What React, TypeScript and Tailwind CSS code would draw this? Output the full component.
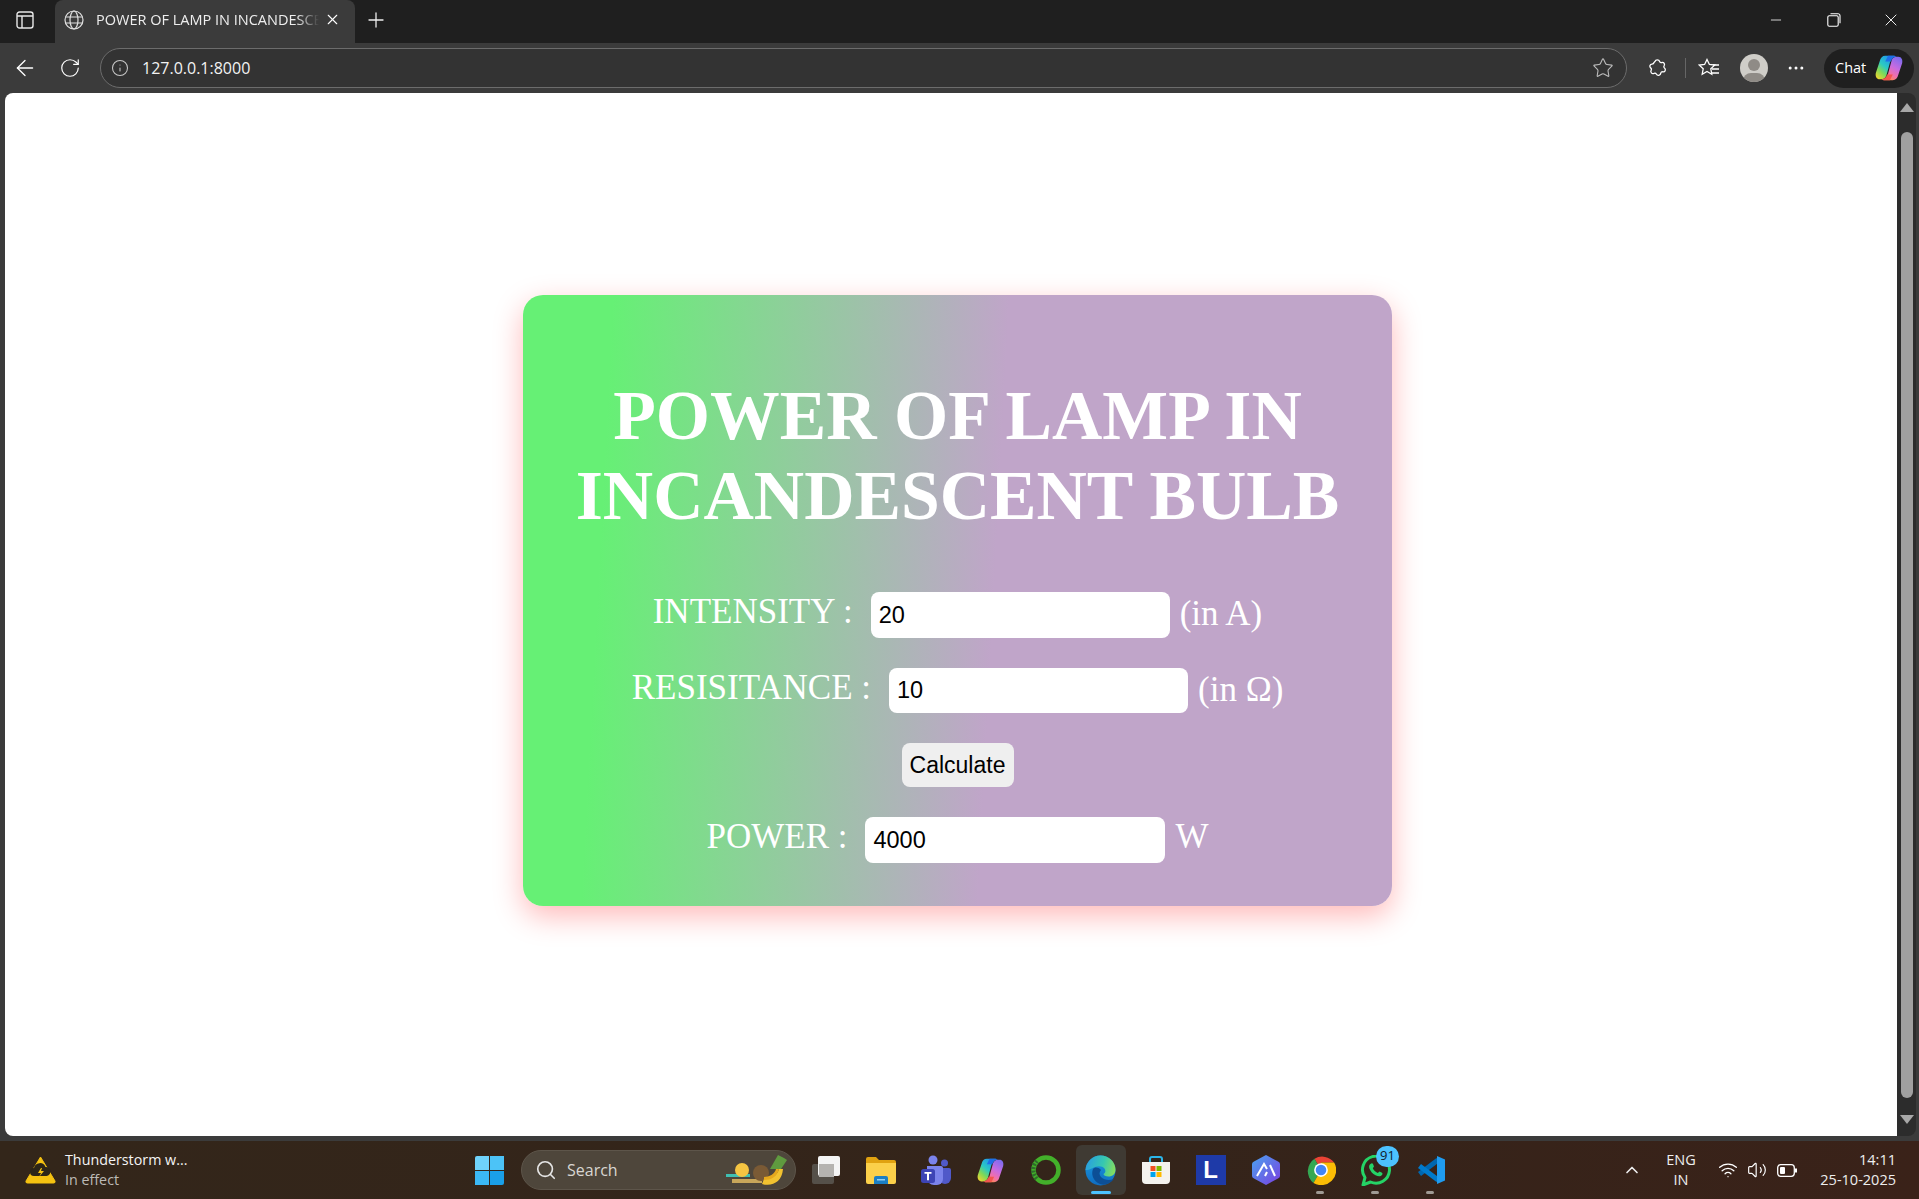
import React from "react";
import { ArrowLeft, ChevronUp, Info, Minus, MoreHorizontal, Plus, RotateCw, Search, Star, Volume2, Wifi, X } from "lucide-react";

const Copilot = ({ size = 30 }: { size?: number }) => (
    <svg width={size} height={size} viewBox="0 0 32 32">
        <defs>
            <linearGradient id="cpA" x1="0.8" y1="0" x2="0.1" y2="1">
                <stop offset="0" stopColor="#1e90f0" />
                <stop offset="0.45" stopColor="#2bc9c4" />
                <stop offset="0.7" stopColor="#7ed957" />
                <stop offset="1" stopColor="#f6d32d" />
            </linearGradient>
            <linearGradient id="cpB" x1="0.8" y1="0" x2="0.3" y2="1">
                <stop offset="0" stopColor="#7b6cf0" />
                <stop offset="0.45" stopColor="#c86be0" />
                <stop offset="0.75" stopColor="#f26fa8" />
                <stop offset="1" stopColor="#fb8b4b" />
            </linearGradient>
        </defs>
        <path d="M12 3H22C19 4 18 7 17 10L13.500 23C12.500 27 10 28 8 28H6C3 28 1 25 2 21L6 9C7 5 9 3 12 3z" fill="url(#cpA)" />
        <path d="M20 29H10C13 28 14 25 15 22L18.500 9C19.500 5 22 4 24 4H26C29 4 31 7 30 11L26 23C25 27 23 29 20 29z" fill="url(#cpB)" />
        <path d="M8 28c3 0 5-2 6-5h6l-3 6h-7z" fill="#f2554f" />
        <path d="M24 4c-3 0-5 2-6 5h-6l3-6h7z" fill="#1f6fe8" />
    </svg>
);

const Slot = ({ children, active, dot, running }: { children: React.ReactNode; active?: boolean; dot?: boolean; running?: boolean }) => (
    <div className="relative w-[55px] h-[50px] flex items-center justify-center">
        {active && <div className="absolute left-[3px] top-0 w-[50px] h-[50px] rounded-md bg-[#3f3a33]" />}
        <div className="relative flex items-center justify-center">{children}</div>
        {running && <div className="absolute bottom-[1px] left-[18px] w-[20px] h-[3px] rounded-full bg-[#4cc2ff]" />}
        {dot && <div className="absolute bottom-[1px] left-[23px] w-[8px] h-[3px] rounded-full bg-[#a09a94]" />}
    </div>
);

export default function App() {
    return (
        <div className="w-[1919px] h-[1199px] flex flex-col overflow-hidden bg-[#3b3b3b] font-['Liberation_Sans',sans-serif]">
            {/* Tab strip */}
            <div className="h-[43px] flex bg-[#1f1f1f] text-white">
                <div className="w-[55px] flex items-center justify-center pb-[4px] pr-[6px]">
                    <svg width="18" height="18" viewBox="0 0 18 18" fill="none" stroke="#e8e8e8" strokeWidth="1.4">
                        <rect x="1" y="1" width="16" height="16" rx="2.500" />
                        <path d="M1 5h16M6 5v12" />
                    </svg>
                </div>
                <div className="w-[300px] bg-[#3b3b3b] rounded-t-lg flex items-center pl-[9px] pb-[4px] gap-[12px]">
                    <svg width="20" height="20" viewBox="0 0 20 20" fill="none" stroke="#e0e0e0" strokeWidth="1.2">
                        <circle cx="10" cy="10" r="9" />
                        <ellipse cx="10" cy="10" rx="4" ry="9" />
                        <path d="M1.500 7h17M1.500 13h17" />
                    </svg>
                    <div className="w-[223px] overflow-hidden whitespace-nowrap text-[14.500px] font-['Open_Sans',sans-serif] text-[#eeeeee] [mask-image:linear-gradient(90deg,black_90%,transparent)]">POWER OF LAMP IN INCANDESCENT</div>
                    <X size={17} strokeWidth={1.6} className="text-white -ml-[7px]" />
                </div>
                <div className="w-[42px] flex items-center justify-center pb-[4px]">
                    <Plus size={24} strokeWidth={1.3} className="text-[#eeeeee]" />
                </div>
                <div className="flex-1" />
                <div className="flex items-center pb-[4px] text-white">
                    <div className="w-[58px] flex justify-center"><Minus size={16} strokeWidth={1.2} /></div>
                    <div className="w-[58px] flex justify-center">
                        <svg width="14" height="14" viewBox="0 0 14 14" fill="none" stroke="white" strokeWidth="1.1">
                            <rect x="0.8" y="2.800" width="10.400" height="10.400" rx="1.500" />
                            <path d="M3.500 .8h7.500a2 2 0 0 1 2 2v7.500" />
                        </svg>
                    </div>
                    <div className="w-[56px] flex justify-center"><X size={20} strokeWidth={1.1} /></div>
                </div>
            </div>

            {/* Toolbar */}
            <div className="h-[50px] flex items-center text-white">
                <div className="w-[50px] flex justify-center"><ArrowLeft size={26} strokeWidth={1.2} /></div>
                <div className="w-[40px] flex justify-center"><RotateCw size={22} strokeWidth={1.3} /></div>
                <div className="ml-[10px] w-[1527px] h-[40px] rounded-full border border-[#6c6c6c] bg-[#333333] flex items-center pl-[10px] pr-[12px]">
                    <Info size={18} strokeWidth={1.4} className="text-[#c8c8c8]" />
                    <span className="ml-[13px] text-[16px] font-['Open_Sans',sans-serif] text-[#f2f2f2]">127.0.0.1:8000</span>
                    <div className="flex-1" />
                    <Star size={22} strokeWidth={1.2} className="text-[#bcbcbc]" />
                </div>
                <div className="w-[56px] flex justify-center ml-[2px]">
                    <svg width="20" height="21" viewBox="0 0 20 21" fill="none" stroke="white" strokeWidth="1.300">
                        <path d="M8 3.500a2.400 2.400 0 0 1 4.600 0c.3 1 1.400 1.300 2.300 1 2-.4 3.300 1.800 2.200 3.400-.6.8-.2 1.700.4 2.200 1.800 1.400.5 4.200-1.700 3.700-1-.2-1.900.4-2 1.400-.3 2.400-3.400 2.900-4.500.8-.5-.9-1.500-1-2.300-.6-2.100.9-4-1.300-2.800-3.200.5-.8.2-1.800-.5-2.300-1.600-1.300-.8-3.800 1.300-3.800 1 0 1.800-.6 2-1.600z" />
                    </svg>
                </div>
                <div className="w-[1px] h-[20px] bg-[#666666]" />
                <div className="w-[45px] flex justify-center">
                    <svg width="22" height="20" viewBox="0 0 22 20" fill="none" stroke="white" strokeWidth="1.300">
                        <path d="M9 1.500l2.400 5 5.300.6-3.900 3.700 1 5.400L9 13.500l-4.800 2.700 1-5.400L1.300 7.100l5.300-.6z" />
                        <path d="M15 7h6M14 11h7M14 15h7" />
                    </svg>
                </div>
                <div className="w-[28px] h-[28px] ml-[9px] rounded-full bg-[#cfcdc8] relative overflow-hidden">
                    <div className="absolute left-[8px] top-[5px] w-[12px] h-[12px] rounded-full bg-[#8f8b86]" />
                    <div className="absolute left-[3px] top-[19px] w-[22px] h-[16px] rounded-full bg-[#8f8b86]" />
                </div>
                <div className="w-[56px] flex justify-center"><MoreHorizontal size={20} strokeWidth={1.6} /></div>
                <div className="w-[90px] h-[39px] rounded-full bg-[#1f1f1f] flex items-center pl-[11px] gap-[8px] text-[14.500px] font-['Open_Sans',sans-serif]">
                    <span>Chat</span>
                    <Copilot size={30} />
                </div>
            </div>

            {/* Page */}
            <div className="flex-1 flex min-h-0 pl-[5px]">
                <div className="flex-1 bg-white rounded-tl-lg rounded-bl-lg pt-[202px] pl-[13px] flex justify-center items-start">
                    <div className="w-[869px] h-[611px] rounded-[20px] bg-[linear-gradient(93deg,#66f075_10%,#c0a5c9_54%)] shadow-[0_10px_30px_rgba(255,0,0,0.28)] font-['Liberation_Serif',serif] text-white">
                        <h1 className="pt-[81px] text-center font-bold text-[69.700px] leading-[79.500px] px-[20px]">POWER OF LAMP IN INCANDESCENT BULB</h1>
                        <div className="mt-[57px] flex justify-center items-center gap-[10px] text-[35px] leading-[46px] h-[46px]">
                            <span className="mr-[8px] mb-[6px]">INTENSITY :</span>
                            <input readOnly value="20" className="w-[299px] h-[46px] bg-white rounded-lg px-[8px] text-[23.500px] text-black font-['Liberation_Sans',sans-serif] outline-none" />
                            <span className="mb-[2px]">(in A)</span>
                        </div>
                        <div className="mt-[30px] flex justify-center items-center gap-[10px] text-[35px] leading-[45px] h-[45px]">
                            <span className="mr-[8px] mb-[6px]">RESISITANCE :</span>
                            <input readOnly value="10" className="w-[299px] h-[45px] bg-white rounded-lg px-[8px] text-[23.500px] text-black font-['Liberation_Sans',sans-serif] outline-none" />
                            <span className="mb-[2px]">(in Ω)</span>
                        </div>
                        <div className="mt-[30px] flex justify-center">
                            <button className="w-[112px] h-[44px] bg-[#efefef] rounded-lg text-[23px] text-black font-['Liberation_Sans',sans-serif]">Calculate</button>
                        </div>
                        <div className="mt-[30px] flex justify-center items-center gap-[10px] text-[35px] leading-[46px] h-[46px]">
                            <span className="mr-[8px] mb-[6px]">POWER :</span>
                            <input readOnly value="4000" className="w-[300px] h-[46px] bg-white rounded-lg px-[8px] text-[23.500px] text-black font-['Liberation_Sans',sans-serif] outline-none" />
                            <span className="mb-[6px]">W</span>
                        </div>
                    </div>
                </div>
                {/* Scrollbar */}
                <div className="w-[19px] mr-[3px] relative bg-[#2c2c2c] rounded-r-lg">
                    <div className="absolute left-[3px] top-[10px] w-0 h-0 border-x-[7px] border-x-transparent border-b-[9px] border-b-[#a8a8a8]" />
                    <div className="absolute left-[4px] top-[39px] w-[12px] h-[966px] rounded-full bg-[#a0a0a0]" />
                    <div className="absolute left-[3px] bottom-[12px] w-0 h-0 border-x-[7px] border-x-transparent border-t-[9px] border-t-[#a8a8a8]" />
                </div>
            </div>

            {/* Taskbar */}
            <div className="mt-[5px] h-[58px] bg-[linear-gradient(90deg,#33261a,#34241a_60%,#3a2219)] flex items-center relative text-white font-['Open_Sans',sans-serif]">
                <div className="w-[461px] flex items-center pl-[25px]">
                    <svg width="31" height="28" viewBox="0 0 31 28">
                        <path d="M15.500 1L30 25a1.500 1.500 0 0 1-1.300 2H2.300A1.500 1.500 0 0 1 1 25z" fill="#f5c211" stroke="#f5c211" strokeLinejoin="round" />
                        <path d="M9 20a4 4 0 0 1 0-8 6 6 0 0 1 11.500-1 4.500 4.500 0 0 1 1 9z" fill="#2c2518" />
                        <path d="M16 12l-3 5h3l-2 4 5-6h-3l1-3z" fill="#f5c211" />
                    </svg>
                    <div className="ml-[9px] leading-[20px]">
                        <div className="text-[14.300px] text-[#f4f4f4]">Thunderstorm w...</div>
                        <div className="text-[14.300px] text-[#bdbab6]">In effect</div>
                    </div>
                </div>
                {/* Start */}
                <div className="w-[56px] flex justify-center">
                    <div className="w-[29px] h-[29px] grid grid-cols-2 gap-[1px]">
                        <div className="bg-[#6fd3fb] rounded-tl-[2px]" />
                        <div className="bg-[#4cc3f7]" />
                        <div className="bg-[#3bb8f5]" />
                        <div className="bg-[#1a9fe8] rounded-br-[2px]" />
                    </div>
                </div>
                {/* Search */}
                <div className="w-[275px] h-[40px] ml-[4px] rounded-full bg-[#4e463b] border border-[#5d554a] flex items-center pl-[13px] relative">
                    <Search size={22} strokeWidth={1.800} className="text-[#e6e6e6]" />
                    <span className="ml-[10px] text-[16px] text-[#d8d6d2]">Search</span>
                    <svg width="62" height="36" viewBox="0 0 62 36" className="absolute right-[7px] top-[1px]">
                        <rect x="0" y="22" width="24" height="3" fill="#3fbfb2" />
                        <rect x="6" y="27" width="30" height="4" fill="#c8a65a" />
                        <circle cx="16" cy="18" r="7" fill="#f5c542" />
                        <circle cx="35" cy="21" r="8" fill="#7a5a35" />
                        <path d="M44 17l8-14 6 3 3 2-6 9z" fill="#5f9a3f" />
                        <path d="M36 32c10 3 20-2 21-15l-4 0c-2 7-8 10-15 10z" fill="#f2c230" />
                        <path d="M38 28c7 0 13-3 15-11l-3 0c-1 5-7 8-12 8z" fill="#e6a81d" />
                    </svg>
                </div>
                {/* Pinned apps */}
                <div className="flex items-center ml-[2px]">
                    <Slot>
                        <div className="relative w-[28px] h-[28px]">
                            <div className="absolute left-0 bottom-0 w-[22px] h-[20px] bg-[#555049] rounded-[2px]" />
                            <div className="absolute right-0 top-0 w-[22px] h-[20px] bg-[#f4f4f4] rounded-[2px]" />
                            <div className="absolute left-[7px] top-[8px] w-[15px] h-[13px] bg-[#b5b3b0]" />
                        </div>
                    </Slot>
                    <Slot>
                        <svg width="30" height="28" viewBox="0 0 30 28">
                            <path d="M0 3a2 2 0 0 1 2-2h8l3 3h15a2 2 0 0 1 2 2v4H0z" fill="#e0a210" />
                            <path d="M0 7h30v19a2 2 0 0 1-2 2H2a2 2 0 0 1-2-2z" fill="#fbd04a" />
                            <path d="M8 28v-6a2 2 0 0 1 2-2h10a2 2 0 0 1 2 2v6z" fill="#1b7fc4" />
                            <rect x="11" y="23" width="8" height="1.500" fill="#8fd0f5" />
                        </svg>
                    </Slot>
                    <Slot>
                        <svg width="30" height="30" viewBox="0 0 30 30">
                            <circle cx="12" cy="5" r="4.500" fill="#7b83eb" />
                            <circle cx="23.500" cy="8" r="3.500" fill="#5059c9" />
                            <path d="M18 13h10a2 2 0 0 1 2 2v8a6 6 0 0 1-12 0z" fill="#5059c9" />
                            <path d="M6 11h14a2 2 0 0 1 2 2v11a6 6 0 0 1-6 6h-3a7 7 0 0 1-7-7z" fill="#7b83eb" />
                            <rect x="0" y="14" width="14" height="14" rx="2.500" fill="#3d44b5" />
                            <path d="M3.500 17h7v1.800H8v6.500H6v-6.500H3.500z" fill="white" />
                        </svg>
                    </Slot>
                    <Slot><Copilot size={29} /></Slot>
                    <Slot>
                        <svg width="32" height="32" viewBox="0 0 32 32" fill="none">
                            <circle cx="16" cy="16" r="12.500" stroke="#43b02a" strokeWidth="4.500" />
                            <path d="M7 7a12.500 12.500 0 0 0 0 18" stroke="#2f6b2a" strokeWidth="4.500" strokeDasharray="2 1.500" />
                        </svg>
                    </Slot>
                    <Slot active running>
                        <svg width="31" height="31" viewBox="0 0 31 31">
                            <defs>
                                <linearGradient id="edA" x1="0" y1="0.5" x2="1" y2="0.7">
                                    <stop offset="0" stopColor="#2a9fe0" />
                                    <stop offset="0.55" stopColor="#36c8b0" />
                                    <stop offset="1" stopColor="#8adf5a" />
                                </linearGradient>
                                <linearGradient id="edB" x1="0" y1="0" x2="0" y2="1">
                                    <stop offset="0" stopColor="#1b9de2" />
                                    <stop offset="1" stopColor="#0f6cc0" />
                                </linearGradient>
                            </defs>
                            <circle cx="15.500" cy="15.500" r="15" fill="url(#edB)" />
                            <path d="M8 14c-2 5 0 11 5 14 5 3 11 2 16-4-5 2-10 1-13-2-2-2-2-5 0-7-3-3-6-3-8-1z" fill="#0c4f96" />
                            <path d="M.6 15C1 7 7.500 .5 15.500 .5 24 .5 30.500 7 30.500 14.500c0 4.500-3 7-7 7-3 0-5-1-5-2.500 2-1 2.500-3.500 1-5.500-2-2.500-6-3-9.500-1.500-4.500 2-7.500 4-9.900 2.500z" fill="url(#edA)" />
                        </svg>
                    </Slot>
                    <Slot>
                        <svg width="30" height="30" viewBox="0 0 30 30">
                            <path d="M9 9V4a2 2 0 0 1 2-2h8a2 2 0 0 1 2 2v5" fill="none" stroke="#2bb5e8" strokeWidth="2" />
                            <path d="M1 7h28v18a4 4 0 0 1-4 4H5a4 4 0 0 1-4-4z" fill="#f4f2ee" />
                            <rect x="9.500" y="11" width="5" height="5" fill="#f25022" />
                            <rect x="15.500" y="11" width="5" height="5" fill="#7fba00" />
                            <rect x="9.500" y="17" width="5" height="5" fill="#00a4ef" />
                            <rect x="15.500" y="17" width="5" height="5" fill="#ffb900" />
                        </svg>
                    </Slot>
                    <Slot>
                        <div className="w-[30px] h-[30px] bg-[#1e3aa8] flex items-center justify-center text-white text-[24px] font-bold font-['Liberation_Sans',sans-serif]">L</div>
                    </Slot>
                    <Slot>
                        <svg width="28" height="30" viewBox="0 0 28 30">
                            <defs>
                                <linearGradient id="hxA" x1="0" y1="0" x2="1" y2="1">
                                    <stop offset="0" stopColor="#4aa3ef" />
                                    <stop offset="1" stopColor="#7a3fe0" />
                                </linearGradient>
                            </defs>
                            <path d="M14 0l12 6.500a3 3 0 0 1 2 3v11a3 3 0 0 1-2 3L14 30 2 23.500a3 3 0 0 1-2-3v-11a3 3 0 0 1 2-3z" fill="url(#hxA)" />
                            <path d="M5 21l7-12 3 5M13 21l2-4M18 10l5 11" fill="none" stroke="white" strokeWidth="2" />
                        </svg>
                    </Slot>
                    <Slot dot>
                        <svg width="30" height="30" viewBox="0 0 48 48">
                            <path d="M24 24L13.600 6A24 24 0 0 1 45 12H24z" fill="#ea4335" />
                            <path d="M24 24l-10.400-18A24 24 0 0 0 12 44.800L24 24z" fill="#34a853" />
                            <path d="M24 24L12 44.800A24 24 0 0 0 45 12H24z" fill="#fbbc05" />
                            <circle cx="24" cy="24" r="11" fill="white" />
                            <circle cx="24" cy="24" r="8.500" fill="#4285f4" />
                        </svg>
                    </Slot>
                    <Slot dot>
                        <svg width="31" height="31" viewBox="0 0 31 31" fill="none">
                            <path d="M3 30l2-7.500A13.500 13.500 0 1 1 10.500 27z" stroke="#25d366" strokeWidth="3" strokeLinejoin="round" />
                            <path d="M10.500 9c1-1 2-1 2.500 0l1 2.500-1.200 1.700c1 2 2.500 3.500 5 4.700l1.700-1.400 2.500 1.200c.7.500.5 1.500 0 2.300-1.500 1.800-4 1.500-6.500.2-3-1.500-5-4-6-6.500-.8-2-.5-3.700 1-4.700z" fill="#25d366" />
                        </svg>
                        <div className="absolute left-[16px] top-[-9px] w-[23px] h-[21px] rounded-full bg-[#4cc2ff] flex items-center justify-center text-[13px] text-[#10202a]">91</div>
                    </Slot>
                    <Slot dot>
                        <svg width="30" height="30" viewBox="0 0 30 30" fill="none">
                            <path d="M22 5L3.500 19" stroke="#0067b0" strokeWidth="5" />
                            <path d="M22 25L3.500 11" stroke="#007acc" strokeWidth="5" />
                            <path d="M21 1l8 3.500v21L21 29z" fill="#1f9cf0" />
                        </svg>
                    </Slot>
                </div>
                <div className="flex-1" />
                {/* Tray */}
                <ChevronUp size={20} strokeWidth={2} className="text-[#eeeeee] mr-[20px]" />
                <div className="text-[14.500px] leading-[20px] text-center text-[#eeeeee] w-[38px] mr-[18px]">
                    <div>ENG</div>
                    <div>IN</div>
                </div>
                <Wifi size={20} strokeWidth={1.6} className="mr-[9px]" />
                <Volume2 size={20} strokeWidth={1.4} className="mr-[10px]" />
                <svg width="20" height="13" viewBox="0 0 20 13" fill="none" className="mr-[19px]">
                    <rect x=".7" y=".7" width="16.600" height="11.600" rx="3" stroke="white" strokeWidth="1.300" />
                    <rect x="3" y="3" width="5" height="7" rx="1" fill="white" />
                    <rect x="18" y="4.500" width="2" height="4" fill="white" />
                </svg>
                <div className="text-[14.500px] leading-[20px] text-right text-[#eeeeee] w-[80px] mr-[23px] whitespace-nowrap">
                    <div>14:11</div>
                    <div>25-10-2025</div>
                </div>
            </div>
        </div>
    );
}
